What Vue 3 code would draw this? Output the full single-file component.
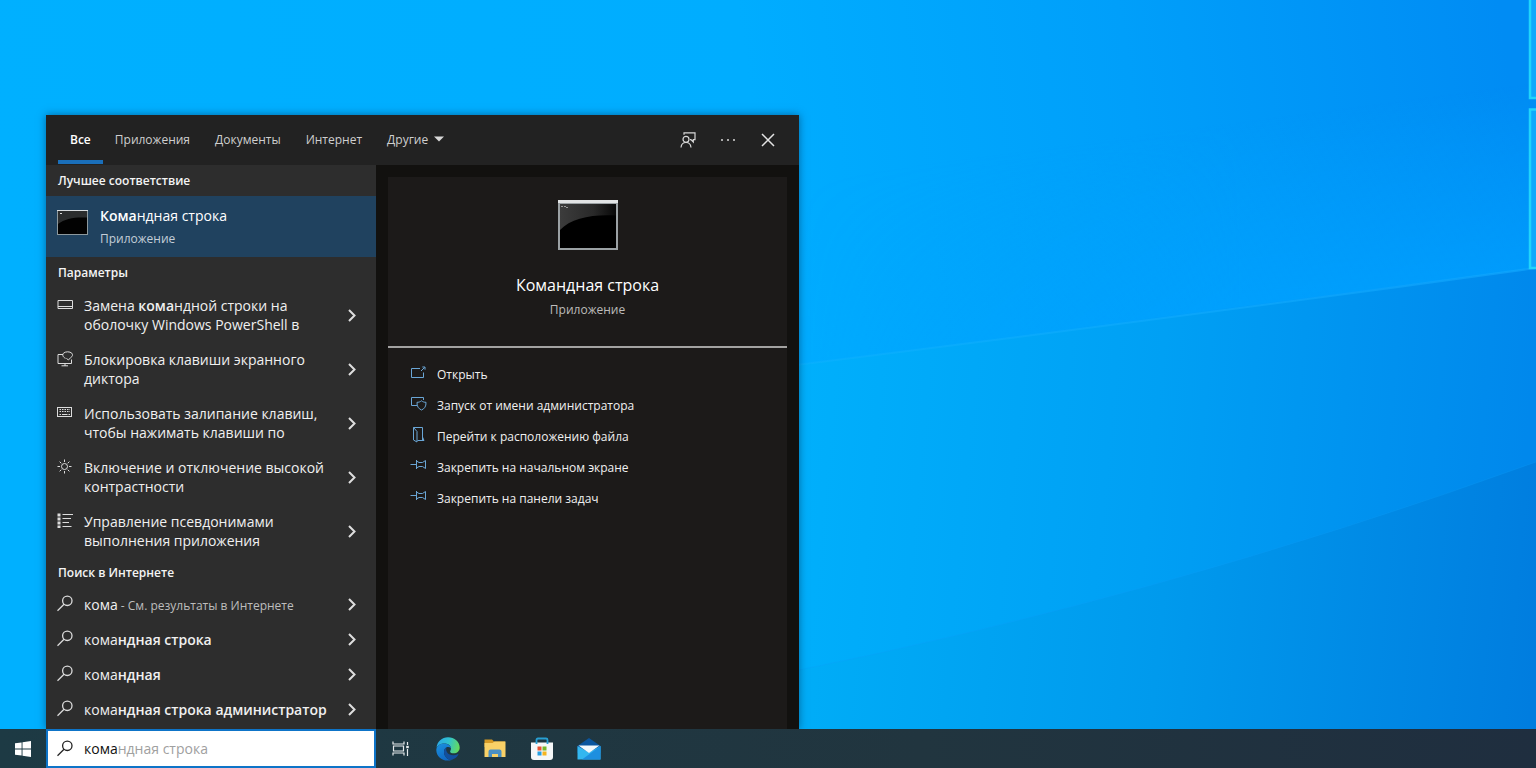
<script setup>
import { computed, ref } from 'vue'

const suggestion = 'командная строка'
const query = ref('кома')
const ghost = computed(() => (suggestion.startsWith(query.value) ? suggestion.slice(query.value.length) : ''))

const tabs = ['Все', 'Приложения', 'Документы', 'Интернет']
const activeTab = ref('Все')

const settings = [
  { icon: 'console', before: 'Замена ', match: 'кома', after: 'ндной строки на оболочку Windows PowerShell в' },
  { icon: 'narrator', before: 'Блокировка клавиши экранного диктора', match: '', after: '' },
  { icon: 'keyboard', before: 'Использовать залипание клавиш, чтобы нажимать клавиши по', match: '', after: '' },
  { icon: 'sun', before: 'Включение и отключение высокой контрастности', match: '', after: '' },
  { icon: 'list', before: 'Управление псевдонимами выполнения приложения', match: '', after: '' },
]

const web = [
  { typed: 'кома', rest: '', hint: ' - См. результаты в Интернете' },
  { typed: 'кома', rest: 'ндная строка', hint: '' },
  { typed: 'кома', rest: 'ндная', hint: '' },
  { typed: 'кома', rest: 'ндная строка администратор', hint: '' },
]

const actions = [
  { icon: 'open', label: 'Открыть' },
  { icon: 'admin', label: 'Запуск от имени администратора' },
  { icon: 'folder', label: 'Перейти к расположению файла' },
  { icon: 'pin', label: 'Закрепить на начальном экране' },
  { icon: 'pin', label: 'Закрепить на панели задач' },
]
</script>

<template>
  <div class="desktop">
    <svg class="wallpaper" viewBox="0 0 1536 768" preserveAspectRatio="none" aria-hidden="true">
      <defs>
        <linearGradient id="sky" gradientUnits="userSpaceOnUse" x1="0" y1="200" x2="1500" y2="0">
          <stop offset="0" stop-color="#00b0ff" />
          <stop offset="0.5" stop-color="#00adff" />
          <stop offset="0.75" stop-color="#009ffa" />
          <stop offset="1" stop-color="#008cf4" />
        </linearGradient>
        <linearGradient id="glow" gradientUnits="userSpaceOnUse" x1="1250" y1="120" x2="1275" y2="310">
          <stop offset="0" stop-color="#00a4ff" stop-opacity="0" />
          <stop offset="1" stop-color="#00a2ff" stop-opacity="0.7" />
        </linearGradient>
        <linearGradient id="fade" x1="0" y1="0" x2="1" y2="0">
          <stop offset="0" stop-color="#fff" stop-opacity="0" />
          <stop offset="0.6" stop-color="#fff" stop-opacity="1" />
        </linearGradient>
        <mask id="glow-mask"><rect x="800" width="736" height="400" fill="url(#fade)" /></mask>
        <linearGradient id="low" gradientUnits="userSpaceOnUse" x1="780" y1="450" x2="1520" y2="520">
          <stop offset="0" stop-color="#00b0fc" />
          <stop offset="0.5" stop-color="#00a0f4" />
          <stop offset="1" stop-color="#0088ec" />
        </linearGradient>
        <linearGradient id="lowest" gradientUnits="userSpaceOnUse" x1="780" y1="650" x2="1530" y2="720">
          <stop offset="0" stop-color="#00aef8" />
          <stop offset="0.5" stop-color="#009aed" />
          <stop offset="1" stop-color="#007ddf" />
        </linearGradient>
        <linearGradient id="beam" x1="0" y1="0" x2="1" y2="0">
          <stop offset="0" stop-color="#18b4ff" stop-opacity="0.3" />
          <stop offset="1" stop-color="#14aaff" stop-opacity="0.6" />
        </linearGradient>
      </defs>
      <rect width="1536" height="768" fill="url(#sky)" />
      <path d="M800 0H1536V268L800 364Z" fill="url(#glow)" mask="url(#glow-mask)" />
      <path d="M780 367Q1160 320 1536 268V768H780Z" fill="url(#low)" />
      <path d="M780 674Q1160 598 1536 462V768H780Z" fill="url(#lowest)" />
      <path d="M780 367Q1160 320 1536 268" fill="none" stroke="url(#beam)" stroke-width="2" />
      <path d="M780 674Q1160 598 1536 462" fill="none" stroke="#0e9cf6" stroke-opacity="0.3" />
      <path d="M1529 -2H1540V98H1529ZM1529 109H1540V269H1529Z" fill="#10a9fb" />
      <path d="M1530 0V98H1536M1536 109.500H1530V268H1536" fill="none" stroke="#20d4fb" stroke-width="2.500" />
    </svg>

    <main class="workspace">
      <section class="search-panel" aria-label="Поиск">
        <header class="tabs">
          <nav class="tab-list">
            <button
              v-for="tab in tabs"
              :key="tab"
              type="button"
              class="tab"
              :class="{ active: tab === activeTab }"
              @click="activeTab = tab"
            >{{ tab }}</button>
            <button type="button" class="tab more">
              Другие
              <svg width="10" height="6" viewBox="0 0 10 6" aria-hidden="true"><path d="M0 0.500H10L5 5.500Z" fill="#d8d8d8" /></svg>
            </button>
          </nav>
          <div class="tools">
            <button type="button" class="tool" aria-label="Отзыв">
              <svg width="18" height="18" viewBox="0 0 18 18" fill="none" stroke="#d8d8d8" stroke-width="1.200">
                <circle cx="7" cy="8.300" r="3" />
                <path d="M2 16.500C2.300 13.300 4.200 11.500 7 11.500S11.700 13.300 12 16.500M5 3.800V1.800H16V8.600H14.300V11L11.900 8.600H11" />
              </svg>
            </button>
            <button type="button" class="tool" aria-label="Параметры">
              <svg width="18" height="18" viewBox="0 0 18 18" fill="#d8d8d8"><circle cx="3" cy="9" r="1" /><circle cx="9" cy="9" r="1" /><circle cx="15" cy="9" r="1" /></svg>
            </button>
            <button type="button" class="tool" aria-label="Закрыть">
              <svg width="18" height="18" viewBox="0 0 18 18" fill="none" stroke="#e4e4e4" stroke-width="1.500"><path d="M3 3L15 15M15 3L3 15" /></svg>
            </button>
          </div>
        </header>

        <div class="columns">
          <div class="results">
            <h2 class="group">Лучшее соответствие</h2>
            <button type="button" class="best">
              <svg class="cmd-small" width="31" height="25" viewBox="0 0 31 25" aria-hidden="true">
                <rect width="31" height="25" fill="#8d999e" />
                <rect width="31" height="1" fill="#d9dde0" />
                <rect x="1" y="1" width="29" height="23" fill="#020202" />
                <path d="M1 1H30V7.500C17 7 8 8.500 1 14Z" fill="#2b2d2e" />
                <path d="M3 3.500H5" stroke="#ddd" />
              </svg>
              <span class="best-text">
                <span class="best-title"><b>Кома</b>ндная строка</span>
                <span class="best-kind">Приложение</span>
              </span>
            </button>

            <h2 class="group">Параметры</h2>
            <ul class="list">
              <li v-for="item in settings" :key="item.icon" class="row tall">
                <a href="#" class="row-link">
                  <svg class="row-icon" width="17" height="17" viewBox="0 0 17 17" fill="none" stroke="#dcdcdc" aria-hidden="true">
                    <path v-if="item.icon === 'console'" d="M1 4.500H15.500V12.500H1ZM1 10.500H15.500" />
                    <template v-else-if="item.icon === 'narrator'">
                      <path d="M6 4.500H1V13.500H14.500V9.500M8 13.500V16M4.500 15.800H11" />
                      <path d="M8.500 8.300C5.500 7 5.300 4.500 6.500 3.200C8.200 1.400 13 1.300 14.800 3.200C16 4.700 15.600 6.400 13.800 7.600L11.300 10L9.500 8.200" />
                    </template>
                    <template v-else-if="item.icon === 'keyboard'">
                      <rect x="0.500" y="3.500" width="14" height="9" />
                      <path d="M2.500 5.500H13M2.500 7.500H13" stroke-width="1.200" stroke-dasharray="1.500 1" />
                      <path d="M2.500 10.500H4M5 10.500H10.500M11.500 10.500H13" />
                    </template>
                    <template v-else-if="item.icon === 'sun'">
                      <circle cx="7.500" cy="8.500" r="3" />
                      <path d="M7.500 1.500V4M7.500 13V15.500M0.500 8.500H3M12 8.500H14.500M2.600 3.600L4.300 5.300M10.700 11.700L12.400 13.400M12.400 3.600L10.700 5.300M4.300 11.700L2.600 13.400" />
                    </template>
                    <template v-else>
                      <path d="M2 1.500V16" stroke-width="3" stroke-dasharray="3 1" />
                      <path d="M5.500 2.500H16M5.500 6.500H14M5.500 10.500H12M5.500 14.500H14.500" />
                    </template>
                  </svg>
                  <span class="row-text">{{ item.before }}<b v-if="item.match">{{ item.match }}</b>{{ item.after }}</span>
                </a>
                <button type="button" class="chevron" aria-label="Подробнее">
                  <svg width="8" height="13" viewBox="0 0 8 13" fill="none" stroke="#dedede" stroke-width="2"><path d="M1 1L6.500 6.500L1 12" /></svg>
                </button>
              </li>
            </ul>

            <h2 class="group">Поиск в Интернете</h2>
            <ul class="list web">
              <li v-for="item in web" :key="item.rest" class="row">
                <a href="#" class="row-link">
                  <svg class="row-icon" width="17" height="17" viewBox="0 0 17 17" fill="none" stroke="#dcdcdc" stroke-width="1.300" aria-hidden="true">
                    <circle cx="10.300" cy="5.800" r="4.700" /><path d="M7 9.200L0.500 15.700" />
                  </svg>
                  <span class="row-text">{{ item.typed }}<b>{{ item.rest }}</b><span class="hint">{{ item.hint }}</span></span>
                </a>
                <button type="button" class="chevron" aria-label="Подробнее">
                  <svg width="8" height="13" viewBox="0 0 8 13" fill="none" stroke="#dedede" stroke-width="2"><path d="M1 1L6.500 6.500L1 12" /></svg>
                </button>
              </li>
            </ul>
          </div>

          <div class="preview">
            <article class="card">
              <div class="hero">
                <svg width="62" height="52" viewBox="0 0 62 52" aria-hidden="true">
                  <defs>
                    <linearGradient id="gloss" x1="0" y1="0" x2="1" y2="0">
                      <stop offset="0" stop-color="#3c3c3c" /><stop offset="0.6" stop-color="#292929" /><stop offset="1" stop-color="#080808" />
                    </linearGradient>
                  </defs>
                  <rect x="1" y="1" width="60" height="50" fill="#9ba1a4" />
                  <rect x="1" y="1" width="60" height="3" fill="#e2e4e5" />
                  <rect x="3" y="5" width="56" height="44" fill="#000" />
                  <path d="M3 5H59V16.500C36 15 14 19 3 31Z" fill="url(#gloss)" />
                  <path d="M4 7.500H9M9 8.500H12" stroke="#999" stroke-dasharray="2 1" />
                </svg>
                <h1 class="hero-title">Командная строка</h1>
                <p class="hero-kind">Приложение</p>
              </div>
              <ul class="actions">
                <li v-for="action in actions" :key="action.label">
                  <button type="button" class="action">
                    <svg width="17" height="17" viewBox="0 0 17 17" fill="none" stroke="#6aa6d6" aria-hidden="true">
                      <path v-if="action.icon === 'open'" d="M10 4.500H1.500V13.500H13.500V8.500M11 7L14.500 3.500M12.300 3H15V5.700" />
                      <path v-else-if="action.icon === 'admin'" d="M7 10.500H1.500V2.500H13.500V5M11.500 5.800C13 7 14.500 7.300 16 7.300C16.200 11.500 14.500 13.700 11.500 15C8.500 13.700 6.800 11.500 7 7.300C8.500 7.300 10 7 11.500 5.800Z" />
                      <path v-else-if="action.icon === 'folder'" d="M3.500 1.500H12.500V11L14 14.500H7.500M3.500 1.500V14L7 16V5.500L3.500 1.500M12.500 11V14" />
                      <path v-else d="M0.500 7.500H6.500M6.500 3V12M6.500 4L9 5.500H12.500L15.500 3.500V11.500L12.500 9.500H9L6.500 11" />
                    </svg>
                    {{ action.label }}
                  </button>
                </li>
              </ul>
            </article>
          </div>
        </div>
      </section>
    </main>

    <footer class="taskbar">
      <button type="button" class="start" aria-label="Пуск">
        <svg width="16" height="16" viewBox="0 0 16 16" fill="#fff"><path d="M0 2.300L6.600 1.400V7.600H0ZM7.500 1.200L16 0V7.600H7.500ZM0 8.400H6.600V14.600L0 13.700ZM7.500 8.400H16V16L7.500 14.800Z" /></svg>
      </button>
      <label class="search-box">
        <svg width="17" height="17" viewBox="0 0 17 17" fill="none" stroke="#222" stroke-width="1.300" aria-hidden="true">
          <circle cx="10.300" cy="5.800" r="4.700" /><path d="M7 9.200L0.500 15.700" />
        </svg>
        <span class="field">
          <input v-model="query" class="query" type="text" aria-label="Введите здесь текст для поиска" />
          <span class="ghost">{{ ghost }}</span>
        </span>
      </label>
      <div class="apps">
        <button type="button" class="app" aria-label="Представление задач">
          <svg width="24" height="24" viewBox="0 0 24 24" fill="none" stroke="#e6eaec" stroke-width="1.200">
            <path d="M4 4.500V7H15V4.500M4 18.500V16H15V18.500M4.500 9H14.500V14H4.500ZM18.500 5V8M18.500 12V19" />
            <path d="M17.200 10H19.800" stroke-width="2.400" />
          </svg>
        </button>
        <button type="button" class="app" aria-label="Microsoft Edge">
          <svg width="24" height="24" viewBox="0 0 24 24">
            <defs>
              <linearGradient id="edge-top" x1="0" y1="0.300" x2="1" y2="0.500"><stop offset="0" stop-color="#2aa9e8" /><stop offset="0.500" stop-color="#30c2cf" /><stop offset="1" stop-color="#65db5c" /></linearGradient>
              <linearGradient id="edge-side" x1="0" y1="0" x2="0.500" y2="1"><stop offset="0" stop-color="#1b93df" /><stop offset="1" stop-color="#1068c4" /></linearGradient>
            </defs>
            <path d="M0.500 11C1 4.500 6 0.300 12 0.300C18.500 0.300 23.700 5 23.700 10.500C23.700 14 21 16.300 17.800 16.300C15 16.300 13.800 15.200 14.200 14.200C16.500 10.500 13.500 6.800 9 6.500C5 6.300 1.500 8.300 0.500 11Z" fill="url(#edge-top)" />
            <path d="M0.400 12C1 8.500 4.500 6.400 8.500 6.500C12 6.600 15 8.800 15 11.300C12 8.500 8 11 8 15C8 19.500 12 23 15.500 23C7 25.500 -0.500 19.500 0.400 12Z" fill="url(#edge-side)" />
            <path d="M11 10.300C7.800 11.500 7.400 15.500 8.800 18.500C10.500 22 14 23.300 16 22.800C19 21.800 21.200 19.800 22.300 17.800C22.600 17.100 22.100 16.900 21.600 17.200C18 19 13 18.300 11.200 15.500C9.900 13.500 9.800 11.500 11 10.300Z" fill="#124f9e" />
          </svg>
        </button>
        <button type="button" class="app" aria-label="Проводник">
          <svg width="24" height="24" viewBox="0 0 24 24">
            <path d="M1.500 2.500H9L11 4.500H22V10H1.500Z" fill="#d69a25" />
            <path d="M1.500 6H9.500L11.500 4.500H22.500V20H1.500Z" fill="#f9d167" />
            <path d="M5.500 20V14.500Q5.500 12.500 7.500 12.500H16.500Q18.500 12.500 18.500 14.500V20H15V17H9V20Z" fill="#4b90c4" />
          </svg>
        </button>
        <button type="button" class="app" aria-label="Microsoft Store">
          <svg width="24" height="24" viewBox="0 0 24 24">
            <path d="M1 5.500H23V20Q23 23 20 23H4Q1 23 1 20Z" fill="#f5f7f8" />
            <path d="M6.500 7V3Q6.500 1.500 8 1.500H16Q17.500 1.500 17.500 3V7" fill="none" stroke="#28a0d4" stroke-width="1.800" />
            <path d="M7.500 9.500H11.500V13.500H7.500Z" fill="#e95030" /><path d="M12.500 9.500H16.500V13.500H12.500Z" fill="#75b82b" />
            <path d="M7.500 14.500H11.500V18.500H7.500Z" fill="#259fe2" /><path d="M12.500 14.500H16.500V18.500H12.500Z" fill="#f5b51f" />
          </svg>
        </button>
        <button type="button" class="app" aria-label="Почта">
          <svg width="24" height="24" viewBox="0 0 24 24">
            <path d="M0.500 9L12 1L23.500 9V16H0.500Z" fill="#0b559e" />
            <path d="M0.500 9L12 15.500L23.500 9V22.500H0.500Z" fill="#33b7f0" />
            <path d="M23.500 9L5 22.500H23.500Z" fill="#1e8fdf" />
            <path d="M1.500 8.500H22.500L12 16Z" fill="#f2f8fc" />
          </svg>
        </button>
      </div>
    </footer>
  </div>
</template>

<style>
body {
  margin: 0;
}
</style>

<style scoped>
.desktop {
  position: relative;
  display: flex;
  flex-direction: column;
  min-height: 100vh;
  overflow: hidden;
  background: #00a8ff;
  font-family: "Open Sans", "Noto Sans", sans-serif;
  font-size: 14px;
  color: #f0f0f0;
}

.wallpaper {
  position: absolute;
  inset: 0;
  width: 100%;
  height: 100%;
}

button {
  margin: 0;
  padding: 0;
  border: 0;
  background: none;
  color: inherit;
  font: inherit;
  text-align: left;
}

a {
  color: inherit;
  text-decoration: none;
}

ul {
  margin: 0;
  padding: 0;
  list-style: none;
}

b {
  font-weight: 600;
}

svg {
  flex: none;
}

.workspace {
  position: relative;
  flex: 1;
  display: flex;
  align-items: flex-end;
  padding-left: 46px;
}

.search-panel {
  display: flex;
  flex-direction: column;
  width: 100%;
  max-width: 753px;
  background: #12110f;
  box-shadow: 0 0 8px rgba(0, 30, 60, 0.5);
}

.tabs {
  display: flex;
  justify-content: space-between;
  height: 50px;
  padding: 0 22px 0 12px;
  background: #222;
}

.tab-list {
  display: flex;
}

.tab {
  display: flex;
  align-items: center;
  gap: 6px;
  height: 46px;
  margin-top: 3px;
  padding: 0 12px 4px;
  box-sizing: border-box;
  font-size: 12px;
  color: #cfcfcf;
}

.tab.active {
  padding-bottom: 0;
  border-bottom: 4px solid #1a6fba;
  font-weight: 600;
  color: #fff;
}

.tab-list .tab:nth-child(n + 3) {
  margin-left: 1px;
}

.tools {
  display: flex;
  align-items: center;
  gap: 22px;
}

.tool {
  display: flex;
}

.columns {
  display: flex;
}

.results {
  width: 330px;
  background: #2d2d2d;
}

.group {
  margin: 0;
  padding-left: 12px;
  font-size: 12px;
  line-height: 31px;
  font-weight: 600;
  color: #f4f4f4;
}

.best {
  display: flex;
  gap: 12px;
  width: 100%;
  height: 61px;
  padding: 9px 11px;
  box-sizing: border-box;
  background: #20425f;
}

.cmd-small {
  margin-top: 5px;
}

.best-text {
  display: flex;
  flex-direction: column;
}

.best-title {
  line-height: 22px;
  color: #fff;
}

.best-kind {
  font-size: 12px;
  line-height: 24px;
  color: #c3ced8;
}

.list + .group {
  line-height: 29px;
}

.web {
  padding-bottom: 2px;
}

.row {
  display: flex;
  align-items: center;
  height: 35px;
  padding: 0 10px 0 11px;
}

.row.tall {
  height: 54px;
}

.row-link {
  flex: 1;
  display: flex;
  gap: 10px;
  line-height: 19px;
}

.row:not(.tall) .row-text {
  white-space: nowrap;
}

.hint {
  font-size: 12px;
  color: #bdbdbd;
  white-space: pre;
}

.chevron {
  display: flex;
  justify-content: center;
  width: 28px;
}

.preview {
  flex: 1;
  display: flex;
  padding: 12px 12px 0;
}

.card {
  flex: 1;
  background: #1c1a19;
}

.hero {
  display: flex;
  flex-direction: column;
  align-items: center;
  height: 171px;
  padding-top: 22px;
  box-sizing: border-box;
  border-bottom: 2px solid #a3a2a1;
}

.hero-title {
  margin: 22px 0 0;
  font-size: 16px;
  line-height: 24px;
  font-weight: 400;
  color: #fff;
}

.hero-kind {
  margin: 4px 0 0;
  font-size: 12px;
  line-height: 18px;
  color: #bdbcbb;
}

.actions {
  padding: 11px 22px;
}

.action {
  display: flex;
  align-items: center;
  gap: 10px;
  height: 31px;
  font-size: 12px;
}

.action svg {
  margin-bottom: 4px;
}

.taskbar {
  position: relative;
  display: flex;
  align-items: stretch;
  height: 39px;
  background: linear-gradient(90deg, #1d3a44, #21353f 60%, #1f2e3f);
}

.start {
  display: flex;
  align-items: center;
  justify-content: center;
  width: 46px;
}

.search-box {
  display: flex;
  align-items: center;
  gap: 10px;
  width: 330px;
  padding: 0 9px;
  box-sizing: border-box;
  border: 2px solid #0e74c8;
  background: #fff;
}

.field {
  display: flex;
  align-items: center;
  line-height: 20px;
}

.query {
  field-sizing: content;
  padding: 0;
  border: 0;
  outline: 0;
  background: none;
  font: inherit;
  color: #111;
}

.ghost {
  color: #a0a0a0;
  white-space: pre;
}

.apps {
  display: flex;
  padding-left: 1px;
}

.app {
  display: flex;
  align-items: center;
  justify-content: center;
  width: 47px;
}
</style>
